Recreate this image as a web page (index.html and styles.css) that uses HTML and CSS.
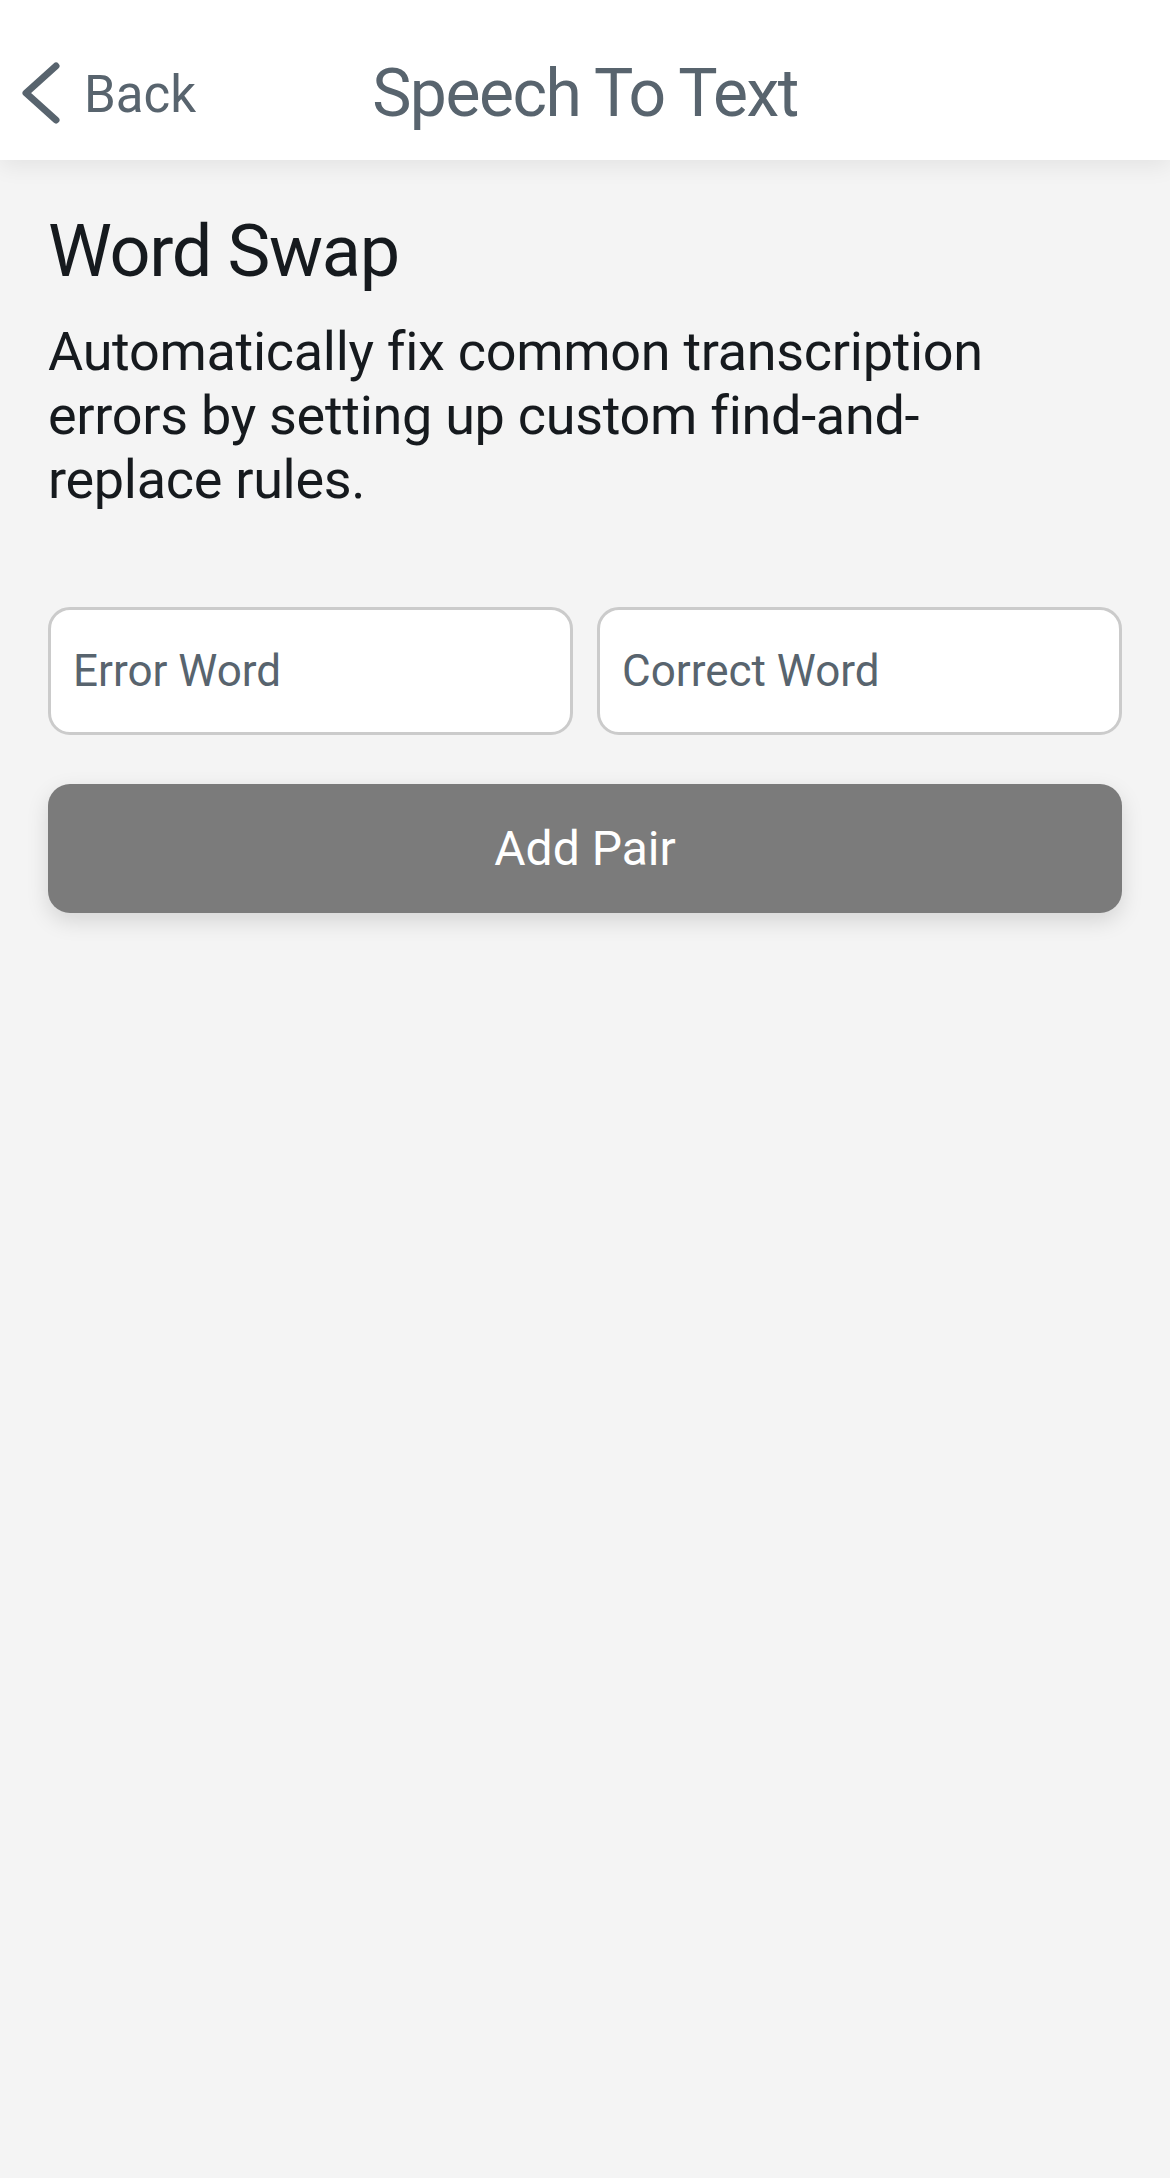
FILE: index.html
```html
<!DOCTYPE html>
<html lang="en">
<head>
<meta charset="utf-8">
<title>Speech To Text</title>
<link rel="stylesheet" href="styles.css">
</head>
<body>
<header class="nav">
  <a class="nav-back" href="#">
    <svg class="chev" width="40" height="64" viewBox="0 0 40 64" aria-hidden="true">
      <polyline points="34,5 4,32 34,59" fill="none" stroke="currentColor" stroke-width="7" stroke-linecap="round" stroke-linejoin="round"/>
    </svg>
    <span>Back</span>
  </a>
  <h1 class="nav-title">Speech To Text</h1>
  <div class="nav-spacer"></div>
</header>
<main class="content">
  <h2 class="heading">Word Swap</h2>
  <p class="desc">Automatically fix common transcription errors by setting up custom find-and-replace rules.</p>
  <div class="pair">
    <input class="field" type="text" placeholder="Error Word">
    <input class="field" type="text" placeholder="Correct Word">
  </div>
  <button class="add-btn" type="button">Add Pair</button>
</main>
</body>
</html>
```
FILE: styles.css
```css
* { box-sizing: border-box; }
html, body {
  margin: 0;
  padding: 0;
}
body {
  background: #f4f4f4;
  min-height: 100vh;
  font-family: Roboto, "Liberation Sans", Arial, sans-serif;
}
.nav {
  position: relative;
  z-index: 1;
  height: 160px;
  padding-top: 28px;
  background: #ffffff;
  display: grid;
  grid-template-columns: 1fr auto 1fr;
  align-items: center;
  box-shadow: 0 6px 22px rgba(0, 0, 0, 0.07);
  color: #58646e;
}
.nav-back {
  display: flex;
  align-items: center;
  gap: 22px;
  padding-left: 22px;
  color: #58646e;
  text-decoration: none;
  font-size: 51px;
  line-height: 51px;
}
.chev {
  display: block;
  margin-top: -2px;
}
.nav-title {
  margin: 0;
  font-size: 66px;
  line-height: 66px;
  font-weight: 400;
  letter-spacing: -1.5px;
  color: #58646e;
}
.content {
  padding: 49px 48px 0;
}
.heading {
  margin: 0;
  font-size: 72px;
  line-height: 86px;
  font-weight: 400;
  letter-spacing: -1.3px;
  color: #161a1e;
}
.desc {
  margin: 25px 0 0;
  max-width: 1000px;
  font-size: 54px;
  line-height: 64px;
  letter-spacing: -0.3px;
  color: #161a1e;
}
.pair {
  margin-top: 95px;
  display: grid;
  grid-template-columns: 1fr 1fr;
  gap: 24px;
}
.field {
  height: 128px;
  border: 3px solid #cbcbcb;
  border-radius: 22px;
  background: #ffffff;
  padding: 0 22px;
  font-family: Roboto, "Liberation Sans", Arial, sans-serif;
  font-size: 44px;
  color: #161a1e;
  outline: none;
  width: 100%;
}
.field::placeholder {
  color: #58646e;
  opacity: 1;
}
.add-btn {
  margin-top: 49px;
  width: 100%;
  height: 129px;
  border: 0;
  border-radius: 22px;
  background: #7b7b7b;
  color: #ffffff;
  font-family: Roboto, "Liberation Sans", Arial, sans-serif;
  font-size: 48px;
  box-shadow: 0 8px 22px rgba(0, 0, 0, 0.13);
  display: block;
}
```
